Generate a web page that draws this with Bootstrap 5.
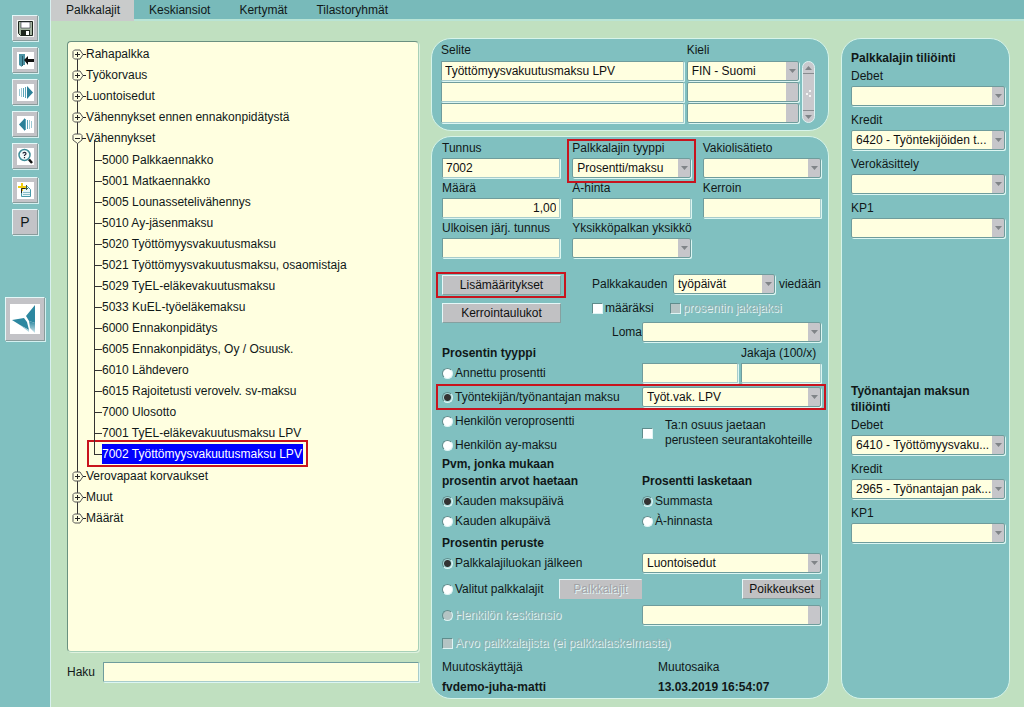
<!DOCTYPE html>
<html lang="fi">
<head>
<meta charset="utf-8">
<meta name="viewport" content="width=device-width, initial-scale=1">
<title>Palkkalajit</title>
<link rel="stylesheet" href="https://cdn.jsdelivr.net/npm/bootstrap@5.3.0/dist/css/bootstrap.min.css">
<style>
:root{--teal:#80c0c0;--pale:#c0e0c0;--cream:#ffffe0;--grey:#c3c3c7;--light:#d6f4ea;--dark:#6f9c9c;--mark:#c8141e}
body{font:12px/20px "Liberation Sans",Arial,sans-serif;color:#101818;background:var(--pale)}
.toolbar{width:50px;flex:none;background:var(--teal);padding-top:15px}
.tool{width:26px;height:26px;margin-bottom:6px;padding:0;background:var(--grey);border:1px solid;border-color:#e4f8f8 #8a9c9c #8a9c9c #e4f8f8;box-shadow:1px 1px #d4f0f0;color:#101818;font-size:14px}
.tool svg{display:block;margin:auto}
.tool-gap{margin-top:2px}
.tool-logo{width:40px;height:44px;margin-top:56px;border-width:1px}
.workspace{border-left:1px solid #d8f0f0}
.tabs{background:#78baba;border-bottom:2px solid #b9e4d6;height:21px}
.tabs a{padding:0 14px 0 15px;line-height:21px;height:19px;color:#101818;text-decoration:none}
.tabs a.active{background:#c9cbcb;height:21px}
.board{display:grid;grid-template-columns:minmax(0,352fr) minmax(0,398fr) minmax(0,169fr);gap:12px;padding:17px 14px 8px 16px}
.tree-col{padding:3px 0 17px;gap:10px}
.tree-box{background:var(--cream);border:1px solid;border-color:#6a9080 #a8d0b8 #a8d0b8 #6a9080;border-radius:4px;box-shadow:1px 1px #dff2df;padding:2px 4px}
.tree,.tree ul{list-style:none;margin:0;padding:0}
.tree{position:relative}
.tree li{line-height:21px;white-space:nowrap}
.tree>li{position:relative}
.tree>li:not(:last-child)::before{content:"";position:absolute;left:5px;top:10px;bottom:-10px;width:1px;background:#333}
.twist{position:relative;width:14px;height:11px;padding:0;border:0;background:none;line-height:0}
.tree ul{padding:1px 0 1px 30px}
.tree ul li{position:relative}
.tree ul li::before{content:"";position:absolute;left:-8px;top:10px;width:8px;height:1px;background:#333}
.tree ul li::after{content:"";position:absolute;left:-8px;top:-10px;height:21px;width:1px;background:#333}
.chosen{position:relative;display:inline-block;background:#00f;color:#fff;line-height:20px;padding-right:1px}
.marked{position:relative}
.marked::after,.chosen::after{content:"";position:absolute;border:2px solid var(--mark);pointer-events:none}
.chosen::after{inset:-4px -5px -3px -15px}
.mark-field::after{inset:1px -5px -5px}
.mark-row::after{inset:-3px -5px -3px -6px}
.pane{background:var(--teal);border:1px solid var(--light);border-radius:20px}
.pane-top{padding:1px 13px 7px 9px;margin-bottom:5px}
.pane-main{padding:1px 7px 0 10px;flex:1 1 auto}
.pane-side{padding:11px 4px 10px 9px}
.texts{display:grid;grid-template-columns:minmax(0,244fr) minmax(0,113fr) 13px;column-gap:3px;row-gap:1px}
.scroller{grid-row:2/5;grid-column:3;background:#c9c9cd;border:1px solid #e0f4f4;border-radius:7px}
.box{display:block;width:100%;min-width:0;height:20px;padding:0 3px;font:inherit;line-height:18px;color:#101010;background-color:var(--cream);border:1px solid;border-color:#6f9c9c #a8cccc #a8cccc #6f9c9c;border-radius:1px;box-shadow:1px 1px #dcf6f2;outline:0}
select.box{appearance:none;padding:0 13px 0 4px;border-radius:2px;border-color:#6f9c9c;background-image:url("data:image/svg+xml,%3Csvg xmlns='http://www.w3.org/2000/svg' width='12' height='18'%3E%3Cpath fill='%23c6c6ca' d='M0 0h12v18H0z'/%3E%3Cpath fill='%23808488' d='M3 7h7L6.500 11z'/%3E%3C/svg%3E");background-repeat:no-repeat;background-position:right center;opacity:1}
select.box:disabled{background-image:linear-gradient(#c6c6ca,#c6c6ca);background-size:12px 100%}
.three{display:grid;grid-template-columns:repeat(3,minmax(0,1fr));column-gap:12px}
.two{display:grid;grid-template-columns:minmax(0,200fr) minmax(0,179fr);align-items:center;min-height:20px}
label{display:block;white-space:nowrap}
.key{height:20px;padding:0 6px;font:inherit;line-height:17px;color:#101010;background:#c1c1c3;border:1px solid;border-color:#e6f8f8 #86a0a0 #86a0a0 #e6f8f8;white-space:nowrap}
.key:disabled,.off{color:#92b2b2;text-shadow:1px 1px #e2f4f4}
.key:disabled{color:#a2a2a6;border-color:#e0f4f4 #c1c1c3 #c1c1c3 #e0f4f4}
.tick{appearance:none;flex:none;width:11px;height:11px;margin:0;background:#fff;border:1px solid;border-color:#5f8c8c #dff4f4 #dff4f4 #5f8c8c}
.tick[type=radio]{border-radius:50%}
.tick[type=radio]:checked{background:radial-gradient(#333 0 3px,#a8dada 4px)}
.tick:disabled{background:#b4c4c4}
.choice{display:flex;align-items:center;gap:2px;height:20px}
.block-a{display:grid;grid-template-columns:minmax(0,119fr) minmax(0,229fr);column-gap:31px;padding:12px 0 1px}
.keys{display:flex;flex-direction:column;gap:8px;padding-top:5px}
.head{font-weight:bold;line-height:17px;margin:0;font-size:12px}
.pane-side .head{line-height:16px}
.w-half{width:102px;flex:none}
.w-loma{flex:0 0 179px}
.pair{display:grid;grid-template-columns:minmax(0,96fr) minmax(0,80fr);column-gap:3px}
.side-field{margin-bottom:4px}
.side-next{margin-top:145px}
.period{padding:1px 0}
.gap-xs{margin-top:2px}
.gap-s{margin-top:4px}
.gap-l{margin-top:6px}
.gap-m{margin-top:8px}
</style>
</head>
<body>
<div class="d-flex min-vh-100">
<aside class="toolbar d-flex flex-column align-items-center" aria-label="Työkalut">
<button class="tool" aria-label="Tallenna"><svg width="17" height="17" viewBox="0 0 17 17"><path fill="#f4f6f4" d="M0 0h17v17H0z"/><path fill="#a4b4a0" stroke="#1c241c" d="M1.500 1.500h14v14h-12l-2-2z"/><path fill="#fff" stroke="#334" stroke-width=".6" d="M4 2h9v6H4z"/><path fill="#1c241c" d="M4 10h9v5H4z"/><path fill="#fff" d="M9 11h3v4H9z"/></svg></button>
<button class="tool" aria-label="Poistu"><svg width="17" height="17" viewBox="0 0 17 17"><path fill="#fff" d="M0 0h17v17H0z"/><path fill="#4b93a4" d="M2 2h6v11H5v2L2 13z"/><path fill="#27596a" d="M5 4h1v10H5z"/><path fill="#101010" d="M7 8l4-4v3h6v3h-6v3z"/></svg></button>
<button class="tool" aria-label="Seuraava"><svg width="17" height="17" viewBox="0 0 17 17"><path fill="#fff" d="M0 0h17v17H0z"/><path stroke="#9cc8d4" d="M2.500 5v7M4.500 4v9"/><path stroke="#5ba4b8" d="M6.500 4v9M8.500 3v11"/><path fill="#2c8098" d="M10 2l6 6.500-6 6.500z"/></svg></button>
<button class="tool" aria-label="Edellinen"><svg width="17" height="17" viewBox="0 0 17 17"><path fill="#fff" d="M0 0h17v17H0z"/><path stroke="#9cc8d4" d="M14.500 5v7M12.500 4v9"/><path stroke="#5ba4b8" d="M10.500 4v9M8.500 3v11"/><path fill="#2c8098" d="M8 2L2 8.500 8 15z"/></svg></button>
<button class="tool" aria-label="Hae"><svg width="17" height="17" viewBox="0 0 17 17"><path fill="#fff" d="M0 0h17v17H0z"/><circle cx="7.500" cy="7" r="5.500" fill="#f4fbfb" stroke="#3d8c98" stroke-width="1.500"/><path fill="none" stroke="#223" stroke-width="1.200" d="M6 5.500Q6 4.300 7.500 4.300T9 5.700Q9 6.500 7.500 7.200V8M7.500 9v1.200"/><path stroke="#111" stroke-width="2.500" d="M12 11.500l3 3.500"/></svg></button>
<button class="tool tool-gap" aria-label="Uusi"><svg width="17" height="17" viewBox="0 0 17 17"><path fill="#fff" d="M0 0h17v17H0z"/><path fill="#e8f6f8" stroke="#4598a8" d="M4.500 4.500h6l3 3v7h-9z"/><path stroke="#88bcc8" d="M6 10.500h7M6 12.500h7"/><path fill="none" stroke="#3c5c48" d="M6 6.500h5M9.500 3v5"/><path stroke="#f0cc10" stroke-width="2" d="M1 5h8M5 1v8"/><path fill="none" stroke="#222" d="M4.500 11V6.500H8"/></svg></button>
<button class="tool">P</button>
<button class="tool tool-logo" aria-label="Koti"><svg width="30" height="30" viewBox="0 0 30 30"><defs><linearGradient id="fade" x2="0" y2="1"><stop stop-color="#2c87a0"/><stop offset="1" stop-color="#cfe6ec"/></linearGradient></defs><path fill="#fff" d="M0 0h30v30H0z"/><path fill="#2c87a0" d="M25 1v18l-6-2-3-5zM2 16l12-2 3 4 2 8-9-5z"/><path fill="url(#fade)" d="M19 17l6 2v10l-5-5zM10 21l9 5v2z"/></svg></button>
</aside>
<div class="workspace d-flex flex-column flex-grow-1">
<nav class="tabs d-flex" aria-label="Välilehdet"><a href="#" class="active" aria-current="page">Palkkalajit</a><a href="#">Keskiansiot</a><a href="#">Kertymät</a><a href="#">Tilastoryhmät</a></nav>
<main class="board flex-grow-1">
<section class="tree-col d-flex flex-column">
<div class="tree-box flex-grow-1">
<svg class="d-none"><symbol id="plus" viewBox="0 0 14 11"><path d="M2.500 1H8l3 4.500L8 10H2.500L1 8.500v-6z" fill="#ffffe0" stroke="#555"/><path d="M3 5.500h5M5.500 3v5M11 5.500h3" stroke="#222"/></symbol><symbol id="minus" viewBox="0 0 14 11"><path d="M1 2.500L2.500 1h6L10 2.500V7L5.500 10.500 1 7z" fill="#ffffe0" stroke="#555"/><path d="M3 5.500h5M10 5.500h4" stroke="#222"/></symbol></svg>
<ul class="tree">
<li><button class="twist" aria-label="Avaa"><svg width="14" height="11"><use href="#plus"/></svg></button>Rahapalkka</li>
<li><button class="twist" aria-label="Avaa"><svg width="14" height="11"><use href="#plus"/></svg></button>Työkorvaus</li>
<li><button class="twist" aria-label="Avaa"><svg width="14" height="11"><use href="#plus"/></svg></button>Luontoisedut</li>
<li><button class="twist" aria-label="Avaa"><svg width="14" height="11"><use href="#plus"/></svg></button>Vähennykset ennen ennakonpidätystä</li>
<li><button class="twist" aria-label="Sulje"><svg width="14" height="11"><use href="#minus"/></svg></button>Vähennykset
<ul>
<li>5000 Palkkaennakko</li>
<li>5001 Matkaennakko</li>
<li>5005 Lounassetelivähennys</li>
<li>5010 Ay-jäsenmaksu</li>
<li>5020 Työttömyysvakuutusmaksu</li>
<li>5021 Työttömyysvakuutusmaksu, osaomistaja</li>
<li>5029 TyEL-eläkevakuutusmaksu</li>
<li>5033 KuEL-työeläkemaksu</li>
<li>6000 Ennakonpidätys</li>
<li>6005 Ennakonpidätys, Oy / Osuusk.</li>
<li>6010 Lähdevero</li>
<li>6015 Rajoitetusti verovelv. sv-maksu</li>
<li>7000 Ulosotto</li>
<li>7001 TyEL-eläkevakuutusmaksu LPV</li>
<li><span class="chosen">7002 Työttömyysvakuutusmaksu LPV</span></li>
</ul></li>
<li><button class="twist" aria-label="Avaa"><svg width="14" height="11"><use href="#plus"/></svg></button>Verovapaat korvaukset</li>
<li><button class="twist" aria-label="Avaa"><svg width="14" height="11"><use href="#plus"/></svg></button>Muut</li>
<li><button class="twist" aria-label="Avaa"><svg width="14" height="11"><use href="#plus"/></svg></button>Määrät</li>
</ul>
</div>
<div class="d-flex align-items-center"><label for="haku" class="pe-2">Haku</label><input id="haku" class="box"></div>
</section>

<section class="d-flex flex-column">
<div class="pane pane-top">
<div class="texts">
<label for="sel1">Selite</label><label for="kie1">Kieli</label><span></span>
<input id="sel1" class="box" value="Työttömyysvakuutusmaksu LPV"><select id="kie1" class="box"><option>FIN - Suomi</option></select>
<input class="box" aria-label="Selite 2"><select class="box" aria-label="Kieli 2" disabled><option></option></select>
<input class="box" aria-label="Selite 3"><select class="box" aria-label="Kieli 3" disabled><option></option></select>
<svg class="scroller" width="13" height="62" viewBox="0 0 11 60"><path fill="#808488" d="M2 8h7L5.500 4zM2 53h7l-3.500 4z"/><path stroke="#888c90" d="M0 11.500h11M0 48.500h11"/><path fill="#f4f4f4" d="M6 28h2v2H6zM3 31h2v2H3zM6 33h2v2H6z"/></svg>
</div></div>

<form class="pane pane-main">
<div class="three">
<div><label for="tun">Tunnus</label><input id="tun" class="box" value="7002"></div>
<div class="marked mark-field"><label for="tyy">Palkkalajin tyyppi</label><select id="tyy" class="box"><option>Prosentti/maksu</option></select></div>
<div><label for="vak">Vakiolisätieto</label><select id="vak" class="box"><option></option></select></div>
<div><label for="maa">Määrä</label><input id="maa" class="box text-end" value="1,00"></div>
<div><label for="ahi">A-hinta</label><input id="ahi" class="box"></div>
<div><label for="ker">Kerroin</label><input id="ker" class="box"></div>
<div><label for="ulk">Ulkoisen järj. tunnus</label><input id="ulk" class="box"></div>
<div><label for="yks">Yksikköpalkan yksikkö</label><select id="yks" class="box"><option></option></select></div>
</div>

<div class="block-a">
<div class="keys"><div class="marked mark-row d-flex"><button type="button" class="key w-100">Lisämääritykset</button></div><button type="button" class="key w-100">Kerrointaulukot</button></div>
<div>
<div class="d-flex gap-s"><label for="kau" class="flex-grow-1">Palkkakauden</label><select id="kau" class="box w-half"><option>työpäivät</option></select><span class="ps-1">viedään</span></div>
<div class="d-flex gap-s gap-3"><div class="choice"><input type="checkbox" class="tick" id="mks"><label for="mks">määräksi</label></div><div class="choice"><input type="checkbox" class="tick" id="pjk" disabled><label for="pjk" class="off">prosentin jakajaksi</label></div></div>
<div class="d-flex gap-s"><label for="lom" class="flex-grow-1 text-end">Loma</label><select id="lom" class="box w-loma"><option></option></select></div>
</div></div>

<div class="two"><h2 class="head">Prosentin tyyppi</h2><div class="pair"><span></span><label for="jak">Jakaja (100/x)</label></div></div>
<div class="two"><div class="choice"><input type="radio" name="pt" class="tick" id="p1"><label for="p1">Annettu prosentti</label></div><div class="pair"><input class="box" aria-label="Prosentti"><input id="jak" class="box"></div></div>
<div class="two gap-s marked mark-row"><div class="choice"><input type="radio" name="pt" class="tick" id="p2" checked><label for="p2">Työntekijän/työnantajan maksu</label></div><select class="box" aria-label="Maksu"><option>Työt.vak. LPV</option></select></div>
<div class="two gap-s"><div><div class="choice"><input type="radio" name="pt" class="tick" id="p3"><label for="p3">Henkilön veroprosentti</label></div><div class="choice gap-s"><input type="radio" name="pt" class="tick" id="p4"><label for="p4">Henkilön ay-maksu</label></div></div>
<div class="d-flex align-items-center"><input type="checkbox" class="tick" id="tao"><label for="tao" class="lh-sm ps-2 ms-1">Ta:n osuus jaetaan<br>perusteen seurantakohteille</label></div></div>
<div class="two align-items-end period"><h2 class="head">Pvm, jonka mukaan<br>prosentin arvot haetaan</h2><h2 class="head">Prosentti lasketaan</h2></div>
<div class="two"><div class="choice"><input type="radio" name="pv" class="tick" id="v1" checked><label for="v1">Kauden maksupäivä</label></div><div class="choice"><input type="radio" name="pl" class="tick" id="l1" checked><label for="l1">Summasta</label></div></div>
<div class="two"><div class="choice"><input type="radio" name="pv" class="tick" id="v2"><label for="v2">Kauden alkupäivä</label></div><div class="choice"><input type="radio" name="pl" class="tick" id="l2"><label for="l2">À-hinnasta</label></div></div>
<div class="two gap-xs"><h2 class="head">Prosentin peruste</h2></div>
<div class="two"><div class="choice"><input type="radio" name="pp" class="tick" id="e1" checked><label for="e1">Palkkalajiluokan jälkeen</label></div><select class="box" aria-label="Luokka"><option>Luontoisedut</option></select></div>
<div class="two gap-l"><div class="d-flex justify-content-between"><div class="choice"><input type="radio" name="pp" class="tick" id="e2"><label for="e2">Valitut palkkalajit</label></div><button type="button" class="key px-2 col-5" disabled>Palkkalajit</button></div><button type="button" class="key ms-auto">Poikkeukset</button></div>
<div class="two gap-l"><div class="choice"><input type="radio" name="pp" class="tick" id="e3" disabled><label for="e3" class="off">Henkilön keskiansio</label></div><select class="box" aria-label="Keskiansio" disabled><option></option></select></div>
<div class="choice gap-m"><input type="checkbox" class="tick" id="arv" disabled><label for="arv" class="off">Arvo palkkalajista (ei palkkalaskelmasta)</label></div>
<div class="two gap-s"><span>Muutoskäyttäjä</span><span class="ps-3">Muutosaika</span></div>
<div class="two"><strong>fvdemo-juha-matti</strong><strong class="ps-3">13.03.2019 16:54:07</strong></div>
</form>
</section>

<section class="pane pane-side">
<h2 class="head">Palkkalajin tiliöinti</h2>
<div class="side-field"><label for="d1">Debet</label><select id="d1" class="box"><option></option></select></div>
<div class="side-field"><label for="k1">Kredit</label><select id="k1" class="box"><option>6420 - Työntekijöiden t...</option></select></div>
<div class="side-field"><label for="vk">Verokäsittely</label><select id="vk" class="box"><option></option></select></div>
<div class="side-field"><label for="q1">KP1</label><select id="q1" class="box"><option></option></select></div>
<h2 class="head side-next">Työnantajan maksun<br>tiliöinti</h2>
<div class="side-field"><label for="d2">Debet</label><select id="d2" class="box"><option>6410 - Työttömyysvaku...</option></select></div>
<div class="side-field"><label for="k2">Kredit</label><select id="k2" class="box"><option>2965 - Työnantajan pak...</option></select></div>
<div class="side-field"><label for="q2">KP1</label><select id="q2" class="box"><option></option></select></div>
</section>
</main>
</div>
</div>
<script src="https://cdn.jsdelivr.net/npm/bootstrap@5.3.0/dist/js/bootstrap.bundle.min.js"></script>
</body>
</html>
